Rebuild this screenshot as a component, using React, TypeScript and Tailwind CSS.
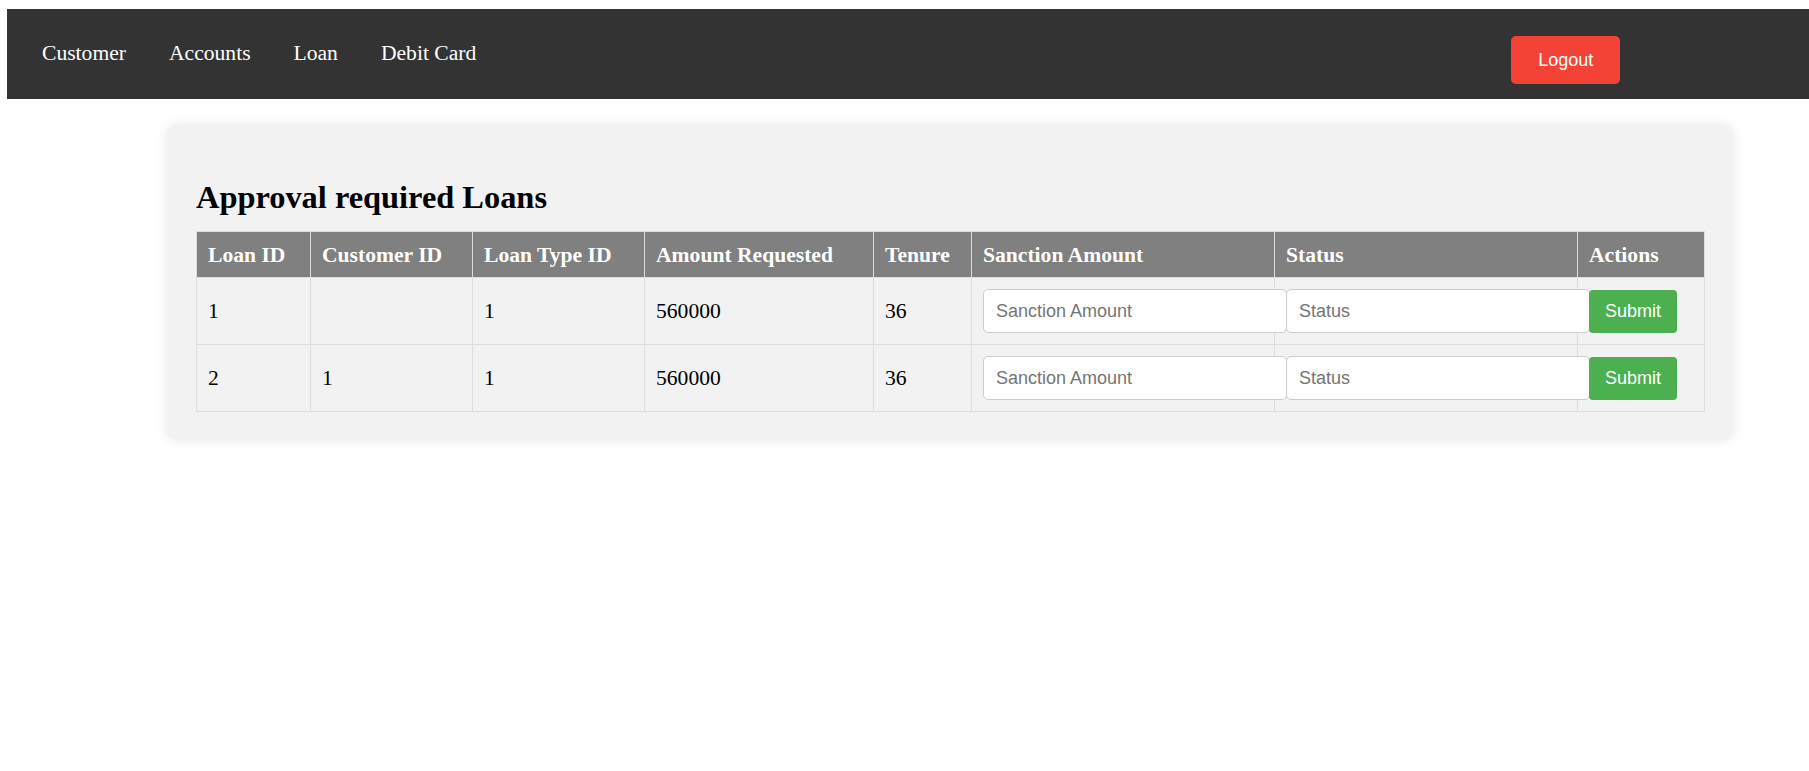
import React from 'react';

interface LoanRow {
  loanId: string;
  customerId: string;
  loanTypeId: string;
  amount: string;
  tenure: string;
}

const loans: LoanRow[] = [
  { loanId: '1', customerId: '', loanTypeId: '1', amount: '560000', tenure: '36' },
  { loanId: '2', customerId: '1', loanTypeId: '1', amount: '560000', tenure: '36' },
];

const headers = [
  'Loan ID',
  'Customer ID',
  'Loan Type ID',
  'Amount Requested',
  'Tenure',
  'Sanction Amount',
  'Status',
  'Actions',
];

const colWidths = ['w-[114px]', 'w-[162px]', 'w-[172px]', 'w-[229px]', 'w-[98px]', 'w-[303px]', 'w-[303px]', 'w-[127px]'];

const NavBar = () => {
  const links = ['Customer', 'Accounts', 'Loan', 'Debit Card'];
  return (
    <div className="pl-[7px] pt-[9px]">
      <nav className="flex h-[90px] items-start bg-[#333333]">
        <ul className="ml-[35px] flex gap-[43px] pt-[32px]">
          {links.map((link) => (
            <li key={link}>
              <a href="#" className="text-[21.6px] leading-[25px] text-white">
                {link}
              </a>
            </li>
          ))}
        </ul>
        <button className="ml-[1035px] mt-[27px] h-[48px] w-[109px] rounded-[5px] bg-[#f44336] font-['Liberation_Sans',Arial,sans-serif] text-[18px] text-white">
          Logout
        </button>
      </nav>
    </div>
  );
};

const LoanTable = () => {
  return (
    <table className="mt-[16px] w-[1509px] table-fixed border-collapse text-[21.6px]">
      <colgroup>
        {colWidths.map((w, i) => (
          <col key={i} className={w} />
        ))}
      </colgroup>
      <thead>
        <tr className="bg-[#808080]">
          {headers.map((h) => (
            <th
              key={h}
              className="h-[46px] whitespace-nowrap border border-[#dddddd] px-[11px] text-left align-middle font-bold leading-[24px] text-white"
            >
              {h}
            </th>
          ))}
        </tr>
      </thead>
      <tbody>
        {loans.map((row) => (
          <tr key={row.loanId}>
            <td className="border border-[#dddddd] px-[11px] align-middle">{row.loanId}</td>
            <td className="border border-[#dddddd] px-[11px] align-middle">{row.customerId}</td>
            <td className="border border-[#dddddd] px-[11px] align-middle">{row.loanTypeId}</td>
            <td className="border border-[#dddddd] px-[11px] align-middle">{row.amount}</td>
            <td className="border border-[#dddddd] px-[11px] align-middle">{row.tenure}</td>
            <td className="border border-[#dddddd] px-[11px] py-[11px] align-middle">
              <input
                type="text"
                placeholder="Sanction Amount"
                className="relative block h-[44px] w-[304px] rounded-[5px] border border-[#cccccc] bg-white px-[12px] font-['Liberation_Sans',Arial,sans-serif] text-[18px] placeholder:text-[#757575]"
              />
            </td>
            <td className="border border-[#dddddd] px-[11px] py-[11px] align-middle">
              <input
                type="text"
                placeholder="Status"
                className="relative block h-[44px] w-[304px] rounded-[5px] border border-[#cccccc] bg-white px-[12px] font-['Liberation_Sans',Arial,sans-serif] text-[18px] placeholder:text-[#757575]"
              />
            </td>
            <td className="border border-[#dddddd] px-[11px] py-[11px] align-middle">
              <button className="relative block h-[43px] w-[88px] rounded-[4px] bg-[#4caf50] font-['Liberation_Sans',Arial,sans-serif] text-[18px] text-white">
                Submit
              </button>
            </td>
          </tr>
        ))}
      </tbody>
    </table>
  );
};

const App = () => {
  return (
    <div className="min-h-screen bg-white font-['Liberation_Serif','Times_New_Roman',serif] text-black">
      <NavBar />
      <div className="ml-[167px] mt-[26px] w-[1566px] rounded-[10px] bg-[#f2f2f2] px-[29px] pb-[28px] pt-[29px] shadow-[0_0_12px_rgba(0,0,0,0.1)]">
        <h2 className="mt-[25px] text-[32.4px] font-bold leading-[36px]">Approval required Loans</h2>
        <LoanTable />
      </div>
    </div>
  );
};

export default App;
